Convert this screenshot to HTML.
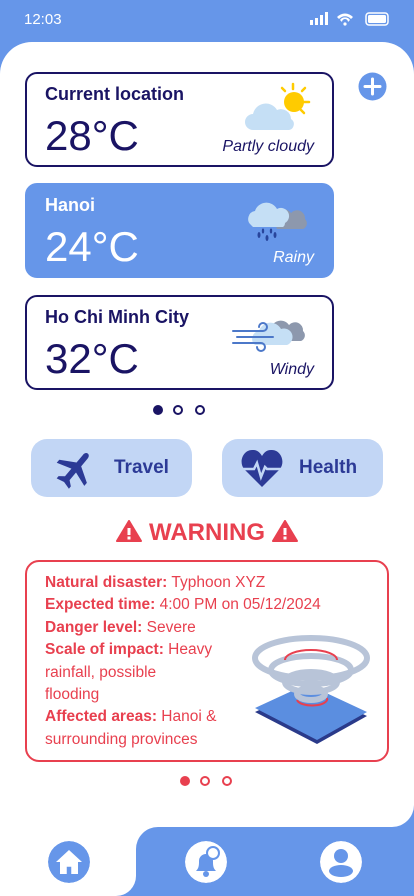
<!DOCTYPE html>
<html><head><meta charset="utf-8"><style>
*{margin:0;padding:0;box-sizing:border-box}
body{width:414px;height:896px;overflow:hidden;background:#6696e9;font-family:"Liberation Sans",sans-serif;position:relative}
.abs{position:absolute}
.white{position:absolute;left:0;top:42px;width:414px;height:854px;background:#fff;border-radius:32px 32px 0 0}
.card{position:absolute;left:25px;width:309px;height:95px;border:2px solid #1a1464;border-radius:12px;color:#1a1464}
.card h2{position:absolute;left:18px;top:10px;font-size:18px;font-weight:bold}
.card .t{position:absolute;left:18px;top:38px;font-size:42px}
.card .d{position:absolute;right:18px;top:64px;font-size:16px;font-style:italic}
.dot{position:absolute;width:10px;height:10px;border-radius:50%}
.btn{position:absolute;top:439px;height:58px;width:161px;background:#c2d6f5;border-radius:16px;color:#2c3a96;font-weight:bold;font-size:19px}
.wbox{position:absolute;left:25px;top:560px;width:364px;height:202px;border:2px solid #e8404f;border-radius:14px;color:#e8404f;font-size:15.5px;line-height:22.4px;padding:10px 0 0 18px}
.nav{position:absolute;top:841px;width:42px;height:42px;border-radius:50%}
</style></head><body>
<div class="abs" style="left:24px;top:11px;color:#fff;font-size:15px">12:03</div>
<svg class="abs" style="left:308px;top:12px" width="82" height="14"><g fill="#fff"><rect x="2" y="8" width="3" height="5"/><rect x="7" y="6" width="3" height="7"/><rect x="12" y="3" width="3" height="10"/><rect x="17" y="0" width="3" height="13"/>
<path d="M29 5a11 11 0 0 1 16 0l-2 2a8 8 0 0 0-12 0z"/><path d="M32 8a6 6 0 0 1 10 0l-2 2a3 3 0 0 0-6 0z"/><circle cx="37" cy="12" r="1.6"/>
<rect x="58" y="1" width="22" height="12" rx="3" fill="none" stroke="#fff" stroke-width="1.5"/><rect x="60" y="3" width="18" height="8" rx="1.5"/></g></svg>
<div class="white"></div>
<div class="abs" style="left:392px;top:805px;width:22px;height:22px;background:#6696e9"><div style="width:22px;height:22px;background:#fff;border-radius:0 0 22px 0"></div></div>
<div class="abs" style="left:136px;top:827px;width:278px;height:69px;background:#6696e9;border-radius:22px 0 0 0"></div>
<div class="abs" style="left:116px;top:876px;width:20px;height:20px;background:#6696e9"><div style="width:20px;height:20px;background:#fff;border-radius:0 0 20px 0"></div></div>

<svg class="abs" style="left:358px;top:72px" width="29" height="29"><circle cx="14.5" cy="14.5" r="14" fill="#6696e9"/><path d="M14.5 7v15M7 14.5h15" stroke="#fff" stroke-width="3" stroke-linecap="round"/></svg>

<div class="card" style="top:72px"><h2>Current location</h2><div class="t">28°C</div><div class="d">Partly cloudy</div>
<svg class="abs" style="left:216px;top:8px" width="72" height="52"><g stroke="#ffcb00" stroke-width="2.5" stroke-linecap="round"><path d="M50 2v5M39 6l3 3M62 6l-3 3M66 20h-5M61 31l-3-3"/></g><circle cx="51" cy="20" r="10" fill="#ffcb00"/><path d="M10 48a8 8 0 0 1 0-16a13 13 0 0 1 24-4a10 10 0 0 1 14 9a6 6 0 0 1-2 11z" fill="#c5dff5"/></svg></div>

<div class="card" style="top:183px;background:#6696e9;border-color:#6696e9;color:#fff"><h2>Hanoi</h2><div class="t">24°C</div><div class="d">Rainy</div>
<svg class="abs" style="left:216px;top:8px" width="72" height="52"><path d="M30 26a10 10 0 0 1 18-6a8 8 0 0 1 14 6a6 6 0 0 1-2 10h-26z" fill="#8d98ad"/><path d="M8 32a8 8 0 0 1 4-14a12 12 0 0 1 22-2a8 8 0 0 1 8 14a5 5 0 0 1-2 4h-30z" fill="#c5dff5"/><g fill="#28459c"><ellipse cx="16" cy="42" rx="1.5" ry="3"/><ellipse cx="24" cy="45" rx="1.5" ry="3"/><ellipse cx="32" cy="42" rx="1.5" ry="3"/><ellipse cx="20" cy="38" rx="1.2" ry="2.5"/><ellipse cx="28" cy="38" rx="1.2" ry="2.5"/></g></svg></div>

<div class="card" style="top:295px"><h2>Ho Chi Minh City</h2><div class="t">32°C</div><div class="d">Windy</div>
<svg class="abs" style="left:204px;top:8px" width="86" height="48"><path d="M40 28a10 10 0 0 1 18-8a8 8 0 0 1 14 6a6 6 0 0 1-2 10h-28z" fill="#8d98ad"/><path d="M24 40a8 8 0 0 1 4-14a12 12 0 0 1 22-2a8 8 0 0 1 6 16z" fill="#c5dff5"/><g stroke="#4c78c9" stroke-width="2" fill="none" stroke-linecap="round"><path d="M2 26h30a4 4 0 1 0-4-4M6 32h36M2 38h28a4 4 0 1 1-4 4"/></g></svg></div>

<div class="dot" style="left:153px;top:405px;background:#1a1464"></div>
<div class="dot" style="left:173px;top:405px;border:2px solid #1a1464"></div>
<div class="dot" style="left:195px;top:405px;border:2px solid #1a1464"></div>

<div class="btn" style="left:31px"><svg class="abs" style="left:22px;top:9px" width="44" height="42" viewBox="0 0 44 42"><g fill="#2c3a96" transform="rotate(40 22 21)"><path d="M22 1c2 0 3 2 3 4v10l15 9v4l-15-5v10l5 4v3l-8-2-8 2v-3l5-4V23L4 28v-4l15-9V5c0-2 1-4 3-4z"/></g></svg><span class="abs" style="left:83px;top:18px">Travel</span></div>
<div class="btn" style="left:222px"><svg class="abs" style="left:18px;top:8px" width="44" height="42"><path d="M22 40L4 22C-2 14 4 2 13 3c5 0 7 3 9 6 2-3 4-6 9-6 9-1 15 11 9 19z" fill="#2c3a96"/><path d="M2 22h12l3-6 4 14 4-10 2 2h14" stroke="#c2d6f5" stroke-width="2.5" fill="none"/></svg><span class="abs" style="left:77px;top:18px">Health</span></div>

<div class="abs" style="left:0;width:414px;top:519px;text-align:center;color:#e8404f;font-weight:bold;font-size:24px">
<svg width="26" height="22" style="vertical-align:-2px"><path d="M13 1L1 21h24z" fill="#e8404f" stroke="#e8404f" stroke-width="2" stroke-linejoin="round"/><rect x="11.5" y="8" width="3" height="7" fill="#fff"/><rect x="11.5" y="16.5" width="3" height="3" fill="#fff"/></svg> WARNING <svg width="26" height="22" style="vertical-align:-2px"><path d="M13 1L1 21h24z" fill="#e8404f" stroke="#e8404f" stroke-width="2" stroke-linejoin="round"/><rect x="11.5" y="8" width="3" height="7" fill="#fff"/><rect x="11.5" y="16.5" width="3" height="3" fill="#fff"/></svg></div>

<div class="wbox"><b>Natural disaster:</b> Typhoon XYZ<br><b>Expected time:</b> 4:00 PM on 05/12/2024<br><b>Danger level:</b> Severe<br><b>Scale of impact:</b> Heavy<br>rainfall, possible<br>flooding<br><b>Affected areas:</b> Hanoi &amp;<br>surrounding provinces
<svg class="abs" style="left:218px;top:68px" width="132" height="120"><path d="M10 82l52-24 60 28-50 28z" fill="#2a3a8a"/><path d="M10 78l52-24 60 28-50 28z" fill="#5b8ee0"/><g fill="none" stroke="#b8c4d8" stroke-width="6"><ellipse cx="66" cy="28" rx="56" ry="20"/><ellipse cx="66" cy="40" rx="40" ry="14"/><ellipse cx="66" cy="52" rx="26" ry="10"/><ellipse cx="66" cy="64" rx="14" ry="6"/></g><g fill="none" stroke="#e8404f" stroke-width="2"><path d="M40 30a26 10 0 0 1 52 0"/><path d="M52 70a14 6 0 0 0 30 -2"/></g></svg></div>

<div class="dot" style="left:180px;top:776px;background:#e8404f"></div>
<div class="dot" style="left:200px;top:776px;border:2px solid #e8404f"></div>
<div class="dot" style="left:222px;top:776px;border:2px solid #e8404f"></div>

<svg class="nav" style="left:48px" viewBox="0 0 42 42"><circle cx="21" cy="21" r="21" fill="#6696e9"/><path d="M8 21L21 9l13 12h-4v12H12V21z" fill="#fff"/><path d="M18 33v-8h6v8" fill="#6696e9" stroke="#fff" stroke-width="1.5"/></svg>
<svg class="nav" style="left:185px" viewBox="0 0 42 42"><circle cx="21" cy="21" r="21" fill="#fff"/><path d="M11 30c3-3 3-6 3-10a7 7 0 0 1 14 0c0 4 0 7 3 10z" fill="#6696e9"/><circle cx="21" cy="33" r="3" fill="#6696e9"/><circle cx="28" cy="12" r="6" fill="#fff" stroke="#6696e9" stroke-width="2"/></svg>
<svg class="nav" style="left:320px" viewBox="0 0 42 42"><circle cx="21" cy="21" r="21" fill="#fff"/><circle cx="21" cy="15" r="7" fill="#6696e9"/><ellipse cx="21" cy="30" rx="12" ry="6" fill="#6696e9"/></svg>
</body></html>
